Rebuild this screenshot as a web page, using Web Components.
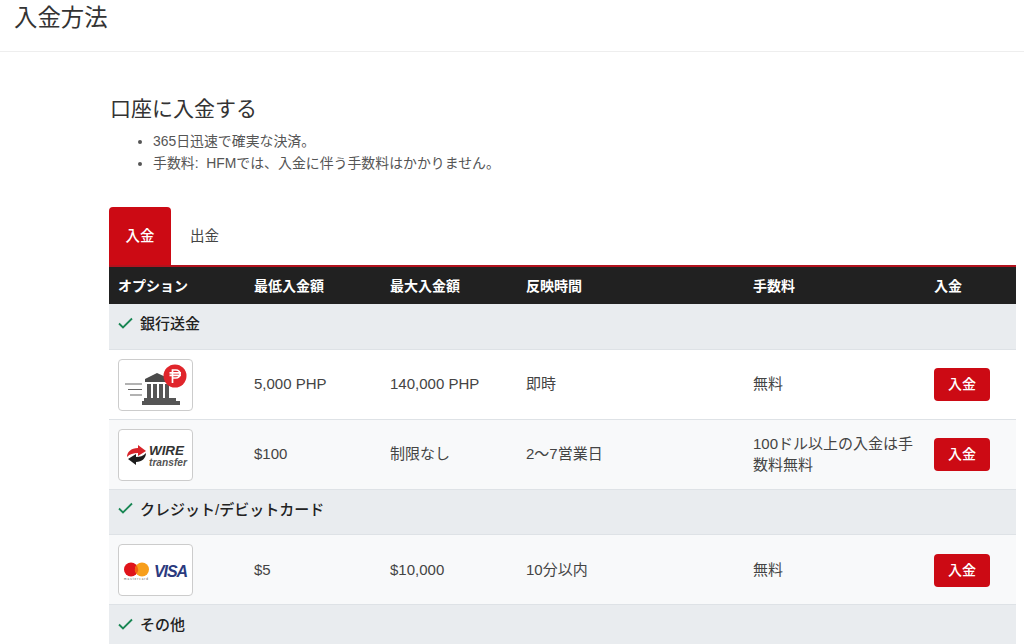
<!DOCTYPE html>
<html lang="ja">
<head>
<meta charset="utf-8">
<title>入金方法</title>
<style>
  html, body {
    margin: 0;
    height: 644px;
    overflow: hidden;
    background: #fff;
    font-family: 'Liberation Sans', 'Noto Sans CJK JP', sans-serif;
    color: #333;
  }
</style>
</head>
<body>
<page-header>入金方法</page-header>
<main-section>
  <deposit-intro heading="口座に入金する">
    <li>365日迅速で確実な決済。</li>
    <li>手数料:&nbsp; HFMでは、入金に伴う手数料はかかりません。</li>
  </deposit-intro>
  <tab-bar></tab-bar>
  <pay-table>
    <head-row></head-row>
    <group-row>銀行送金</group-row>
    <pay-row logo="bank" min="5,000 PHP" max="140,000 PHP" time="即時" fee="無料"></pay-row>
    <pay-row logo="wire" min="$100" max="制限なし" time="2〜7営業日" fee="100ドル以上の入金は手数料無料" alt></pay-row>
    <group-row>クレジット/デビットカード</group-row>
    <pay-row logo="card" min="$5" max="$10,000" time="10分以内" fee="無料" alt></pay-row>
    <group-row>その他</group-row>
  </pay-table>
</main-section>

<script>
  // Column widths shared by every row of the table
  const COLUMNS = '136px 136px 136px 227px 181px 91px'

  // Create the logos
  const LOGOS = {
    bank: `
      <svg width="73" height="50" viewBox="0 0 73 50">
        <path d="M6 24h17M9 29.500h14M11 35h12" fill="none" stroke="#666" stroke-width="1.200"/>
        <path d="M26 22v-3l12-6 11 5v4z" fill="#4a4a4a"/>
        <path d="M28 24h4v14h-4zM34 24h4v14h-4zM40 24h4v14h-4zM46 24h4v14h-4z" fill="#555"/>
        <path d="M25 38h32v3H25zM23 41h38v4H23z" fill="#555"/>
        <circle cx="56" cy="16" r="11.500" fill="#e0252b"/>
        <path d="M53.500 23V10h3.500a4 4 0 0 1 0 8h-3.500M50.500 12.800h11.500M50.500 15.400h11.500" fill="none" stroke="#fff" stroke-width="1.700"/>
      </svg>`,
    wire: `
      <svg width="73" height="50" viewBox="0 0 73 50">
        <path d="M8 27c0-5 4-9 11-9l0-3 8 6-8 5 0-3c-5 0-8 1-11 4z" fill="#d8242a"/>
        <path d="M27 23c0 5-4 9-10 9l0 3-8-6 8-5 0 3c4 0 7-1 10-4z" fill="#1c1c1c"/>
        <text x="30" y="25" font-family="Liberation Sans" font-size="13" font-weight="700" font-style="italic" fill="#333" textLength="35" lengthAdjust="spacingAndGlyphs">WIRE</text>
        <text x="30" y="36" font-family="Liberation Sans" font-size="10" font-weight="700" font-style="italic" fill="#555" textLength="38" lengthAdjust="spacingAndGlyphs">transfer</text>
      </svg>`,
    card: `
      <svg width="73" height="50" viewBox="0 0 73 50">
        <circle cx="12" cy="24.500" r="7" fill="#e0131a"/>
        <circle cx="23" cy="24.500" r="7" fill="#f79e1b"/>
        <path d="M17.500 20.200a7 7 0 0 1 0 8.600a7 7 0 0 1 0-8.600z" fill="#f2600f"/>
        <text x="5" y="35" font-family="Liberation Sans" font-size="3" fill="#555" textLength="24">mastercard</text>
        <text x="35" y="32" font-family="Liberation Sans" font-size="16" font-weight="700" font-style="italic" fill="#2b3a7e" textLength="34">VISA</text>
      </svg>`
  }

  customElements.define('page-header',
    /**
     * Top title bar of the page.
     */
    class extends HTMLElement {
      constructor () {
        super()
        this.attachShadow({ mode: 'open' }).innerHTML = `
          <style>
            :host {
              display: block;
              height: 51px;
              padding-left: 14px;
              border-bottom: 1px solid #eee;
              font-size: 23.400px;
              line-height: 36px;
              color: #333;
            }
          </style>
          <slot></slot>`
      }
    }
  )

  customElements.define('main-section',
    /**
     * Holds everything below the title bar.
     */
    class extends HTMLElement {
      constructor () {
        super()
        this.attachShadow({ mode: 'open' }).innerHTML = `
          <style>
            :host {
              display: block;
              padding: 42px 8px 0 109px;
            }
          </style>
          <slot></slot>`
      }
    }
  )

  customElements.define('deposit-intro',
    /**
     * Heading and the list of short points above the tabs.
     */
    class extends HTMLElement {
      constructor () {
        super()
        this.attachShadow({ mode: 'open' }).innerHTML = `
          <style>
            :host {
              display: block;
              height: 113px;
            }
            h2 {
              margin: 0;
              font-size: 21px;
              font-weight: 400;
              line-height: 30px;
              color: #333;
              padding-left: 1px;
            }
            ul {
              margin: 6px 0 0;
              padding-left: 44px;
              font-size: 13.900px;
              line-height: 22px;
              color: #555;
            }
          </style>
          <h2></h2>
          <ul><slot></slot></ul>`
        this.shadowRoot.querySelector('h2').textContent = this.getAttribute('heading')
      }
    }
  )

  customElements.define('tab-bar',
    /**
     * The deposit and withdrawal tabs.
     */
    class extends HTMLElement {
      constructor () {
        super()
        this.attachShadow({ mode: 'open' }).innerHTML = `
          <style>
            :host {
              display: flex;
              height: 58px;
              font-size: 14.500px;
            }
            div {
              display: flex;
              align-items: center;
              justify-content: center;
              height: 100%;
              padding: 0 17px 3px;
              box-sizing: border-box;
              color: #444;
            }
            .active {
              width: 62px;
              padding: 0 0 3px;
              background: #cc0a14;
              border-radius: 4px 4px 0 0;
              color: #fff;
              font-weight: 500;
            }
            .plain {
              padding-left: 19px;
            }
          </style>
          <div class="active">入金</div>
          <div class="plain">出金</div>`
      }
    }
  )

  customElements.define('pay-table',
    /**
     * Wraps the rows and draws the red rule on top.
     */
    class extends HTMLElement {
      constructor () {
        super()
        this.attachShadow({ mode: 'open' }).innerHTML = `
          <style>
            :host {
              display: block;
              border-top: 2px solid #b3121d;
              font-size: 15px;
            }
          </style>
          <slot></slot>`
      }
    }
  )

  customElements.define('head-row',
    /**
     * Dark row with the column names.
     */
    class extends HTMLElement {
      constructor () {
        super()
        this.attachShadow({ mode: 'open' }).innerHTML = `
          <style>
            :host {
              display: grid;
              grid-template-columns: ${COLUMNS};
              height: 37px;
              padding-bottom: 1px;
              box-sizing: border-box;
              align-items: center;
              background: #212121;
              color: #fff;
              font-size: 14px;
              font-weight: 700;
            }
            span {
              padding-left: 9px;
            }
          </style>
          <span>オプション</span>
          <span>最低入金額</span>
          <span>最大入金額</span>
          <span>反映時間</span>
          <span>手数料</span>
          <span>入金</span>`
      }
    }
  )

  customElements.define('group-row',
    /**
     * Grey row that names a group of payment methods.
     */
    class extends HTMLElement {
      constructor () {
        super()
        this.attachShadow({ mode: 'open' }).innerHTML = `
          <style>
            :host {
              display: flex;
              align-items: center;
              gap: 7px;
              height: 45.600px;
              box-sizing: border-box;
              padding: 0 0 7px 9px;
              background: #e9ecef;
              border-bottom: 1px solid #dee2e6;
              font-size: 15px;
              font-weight: 500;
              color: #222;
            }
            svg {
              flex: none;
            }
          </style>
          <svg width="15" height="12" viewBox="0 0 15 12">
            <path d="M1 6.500l4 4 9-9" fill="none" stroke="#198754" stroke-width="1.800"/>
          </svg>
          <slot></slot>`
      }
    }
  )

  customElements.define('pay-button',
    /**
     * Red deposit button.
     */
    class extends HTMLElement {
      constructor () {
        super()
        this.attachShadow({ mode: 'open' }).innerHTML = `
          <style>
            :host {
              display: flex;
              align-items: center;
              justify-content: center;
              width: 56px;
              height: 33px;
              background: #cc0a14;
              border-radius: 4px;
              color: #fff;
              font-size: 14px;
              font-weight: 500;
            }
          </style>
          <slot></slot>`
      }
    }
  )

  customElements.define('pay-row',
    /**
     * One payment method with its logo, limits, fee and button.
     */
    class extends HTMLElement {
      constructor () {
        super()
        this.attachShadow({ mode: 'open' }).innerHTML = `
          <style>
            :host {
              display: grid;
              grid-template-columns: ${COLUMNS};
              align-items: center;
              height: 70px;
              padding-top: 1px;
              box-sizing: border-box;
              background: #fff;
              border-bottom: 1px solid #dee2e6;
              color: #444;
              font-size: 15px;
              line-height: 21px;
            }
            :host([alt]) {
              background: #f8f9fa;
            }
            .cell {
              padding-left: 9px;
            }
            .text {
              padding-bottom: 2px;
            }
            .logo {
              width: 73px;
              height: 50px;
              background: #fff;
              border: 1px solid #ccc;
              border-radius: 4px;
            }
            svg {
              display: block;
            }
            .fee {
              width: 165px;
            }
          </style>
          <div class="cell"><div class="logo"></div></div>
          <div class="cell text min"></div>
          <div class="cell text max"></div>
          <div class="cell text time"></div>
          <div class="cell text fee"></div>
          <div class="cell"><pay-button>入金</pay-button></div>`

        this.shadowRoot.querySelector('.logo').innerHTML = LOGOS[this.getAttribute('logo')]
        this.shadowRoot.querySelector('.min').textContent = this.getAttribute('min')
        this.shadowRoot.querySelector('.max').textContent = this.getAttribute('max')
        this.shadowRoot.querySelector('.time').textContent = this.getAttribute('time')
        this.shadowRoot.querySelector('.fee').textContent = this.getAttribute('fee')
      }
    }
  )
</script>
</body>
</html>
